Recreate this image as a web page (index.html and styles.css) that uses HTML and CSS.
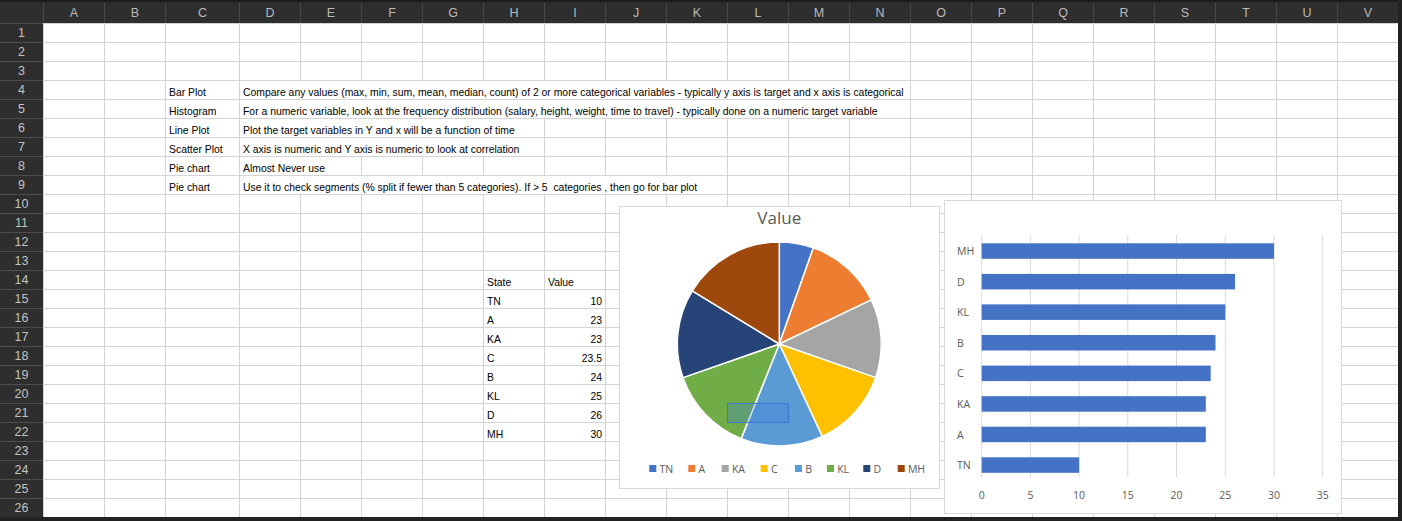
FILE: index.html
```html
<!DOCTYPE html>
<html>
<head>
<meta charset="utf-8">
<link rel="stylesheet" href="styles.css">
</head>
<body>
<div class="sheet">
  <div class="r hdr">
    <div class="corner"></div>
    <div class="hc">A</div><div class="hc">B</div><div class="hc">C</div><div class="hc">D</div><div class="hc">E</div><div class="hc">F</div><div class="hc">G</div><div class="hc">H</div><div class="hc">I</div><div class="hc">J</div><div class="hc">K</div><div class="hc">L</div><div class="hc">M</div><div class="hc">N</div><div class="hc">O</div><div class="hc">P</div><div class="hc">Q</div><div class="hc">R</div><div class="hc">S</div><div class="hc">T</div><div class="hc">U</div><div class="hc">V</div>
  </div>
  <div class="r"><div class="rh">1</div><div class="c"></div><div class="c"></div><div class="c"></div><div class="c"></div><div class="c"></div><div class="c"></div><div class="c"></div><div class="c"></div><div class="c"></div><div class="c"></div><div class="c"></div><div class="c"></div><div class="c"></div><div class="c"></div><div class="c"></div><div class="c"></div><div class="c"></div><div class="c"></div><div class="c"></div><div class="c"></div><div class="c"></div><div class="c"></div></div>
  <div class="r"><div class="rh">2</div><div class="c"></div><div class="c"></div><div class="c"></div><div class="c"></div><div class="c"></div><div class="c"></div><div class="c"></div><div class="c"></div><div class="c"></div><div class="c"></div><div class="c"></div><div class="c"></div><div class="c"></div><div class="c"></div><div class="c"></div><div class="c"></div><div class="c"></div><div class="c"></div><div class="c"></div><div class="c"></div><div class="c"></div><div class="c"></div></div>
  <div class="r"><div class="rh">3</div><div class="c"></div><div class="c"></div><div class="c"></div><div class="c"></div><div class="c"></div><div class="c"></div><div class="c"></div><div class="c"></div><div class="c"></div><div class="c"></div><div class="c"></div><div class="c"></div><div class="c"></div><div class="c"></div><div class="c"></div><div class="c"></div><div class="c"></div><div class="c"></div><div class="c"></div><div class="c"></div><div class="c"></div><div class="c"></div></div>
  <div class="r"><div class="rh">4</div><div class="c"></div><div class="c"></div><div class="c">Bar Plot</div><div class="c s11">Compare any values (max, min, sum, mean, median, count) of 2 or more categorical variables - typically y axis is target and x axis is categorical</div><div class="c"></div><div class="c"></div><div class="c"></div><div class="c"></div><div class="c"></div><div class="c"></div><div class="c"></div><div class="c"></div></div>
  <div class="r"><div class="rh">5</div><div class="c"></div><div class="c"></div><div class="c">Histogram</div><div class="c s11">For a numeric variable, look at the frequency distribution (salary, height, weight, time to travel) - typically done on a numeric target variable</div><div class="c"></div><div class="c"></div><div class="c"></div><div class="c"></div><div class="c"></div><div class="c"></div><div class="c"></div><div class="c"></div></div>
  <div class="r"><div class="rh">6</div><div class="c"></div><div class="c"></div><div class="c">Line Plot</div><div class="c s5">Plot the target variables in Y and x will be a function of time</div><div class="c"></div><div class="c"></div><div class="c"></div><div class="c"></div><div class="c"></div><div class="c"></div><div class="c"></div><div class="c"></div><div class="c"></div><div class="c"></div><div class="c"></div><div class="c"></div><div class="c"></div><div class="c"></div></div>
  <div class="r"><div class="rh">7</div><div class="c"></div><div class="c"></div><div class="c">Scatter Plot</div><div class="c s5">X axis is numeric and Y axis is numeric to look at correlation</div><div class="c"></div><div class="c"></div><div class="c"></div><div class="c"></div><div class="c"></div><div class="c"></div><div class="c"></div><div class="c"></div><div class="c"></div><div class="c"></div><div class="c"></div><div class="c"></div><div class="c"></div><div class="c"></div></div>
  <div class="r"><div class="rh">8</div><div class="c"></div><div class="c"></div><div class="c">Pie chart</div><div class="c s2">Almost Never use</div><div class="c"></div><div class="c"></div><div class="c"></div><div class="c"></div><div class="c"></div><div class="c"></div><div class="c"></div><div class="c"></div><div class="c"></div><div class="c"></div><div class="c"></div><div class="c"></div><div class="c"></div><div class="c"></div><div class="c"></div><div class="c"></div><div class="c"></div></div>
  <div class="r"><div class="rh">9</div><div class="c"></div><div class="c"></div><div class="c">Pie chart</div><div class="c s8">Use it to check segments (% split if fewer than 5 categories). If &gt; 5&nbsp; categories , then go for bar plot</div><div class="c"></div><div class="c"></div><div class="c"></div><div class="c"></div><div class="c"></div><div class="c"></div><div class="c"></div><div class="c"></div><div class="c"></div><div class="c"></div><div class="c"></div></div>
  <div class="r"><div class="rh">10</div><div class="c"></div><div class="c"></div><div class="c"></div><div class="c"></div><div class="c"></div><div class="c"></div><div class="c"></div><div class="c"></div><div class="c"></div><div class="c"></div><div class="c"></div><div class="c"></div><div class="c"></div><div class="c"></div><div class="c"></div><div class="c"></div><div class="c"></div><div class="c"></div><div class="c"></div><div class="c"></div><div class="c"></div><div class="c"></div></div>
  <div class="r"><div class="rh">11</div><div class="c"></div><div class="c"></div><div class="c"></div><div class="c"></div><div class="c"></div><div class="c"></div><div class="c"></div><div class="c"></div><div class="c"></div><div class="c"></div><div class="c"></div><div class="c"></div><div class="c"></div><div class="c"></div><div class="c"></div><div class="c"></div><div class="c"></div><div class="c"></div><div class="c"></div><div class="c"></div><div class="c"></div><div class="c"></div></div>
  <div class="r"><div class="rh">12</div><div class="c"></div><div class="c"></div><div class="c"></div><div class="c"></div><div class="c"></div><div class="c"></div><div class="c"></div><div class="c"></div><div class="c"></div><div class="c"></div><div class="c"></div><div class="c"></div><div class="c"></div><div class="c"></div><div class="c"></div><div class="c"></div><div class="c"></div><div class="c"></div><div class="c"></div><div class="c"></div><div class="c"></div><div class="c"></div></div>
  <div class="r"><div class="rh">13</div><div class="c"></div><div class="c"></div><div class="c"></div><div class="c"></div><div class="c"></div><div class="c"></div><div class="c"></div><div class="c"></div><div class="c"></div><div class="c"></div><div class="c"></div><div class="c"></div><div class="c"></div><div class="c"></div><div class="c"></div><div class="c"></div><div class="c"></div><div class="c"></div><div class="c"></div><div class="c"></div><div class="c"></div><div class="c"></div></div>
  <div class="r"><div class="rh">14</div><div class="c"></div><div class="c"></div><div class="c"></div><div class="c"></div><div class="c"></div><div class="c"></div><div class="c"></div><div class="c">State</div><div class="c">Value</div><div class="c"></div><div class="c"></div><div class="c"></div><div class="c"></div><div class="c"></div><div class="c"></div><div class="c"></div><div class="c"></div><div class="c"></div><div class="c"></div><div class="c"></div><div class="c"></div><div class="c"></div></div>
  <div class="r"><div class="rh">15</div><div class="c"></div><div class="c"></div><div class="c"></div><div class="c"></div><div class="c"></div><div class="c"></div><div class="c"></div><div class="c">TN</div><div class="c num">10</div><div class="c"></div><div class="c"></div><div class="c"></div><div class="c"></div><div class="c"></div><div class="c"></div><div class="c"></div><div class="c"></div><div class="c"></div><div class="c"></div><div class="c"></div><div class="c"></div><div class="c"></div></div>
  <div class="r"><div class="rh">16</div><div class="c"></div><div class="c"></div><div class="c"></div><div class="c"></div><div class="c"></div><div class="c"></div><div class="c"></div><div class="c">A</div><div class="c num">23</div><div class="c"></div><div class="c"></div><div class="c"></div><div class="c"></div><div class="c"></div><div class="c"></div><div class="c"></div><div class="c"></div><div class="c"></div><div class="c"></div><div class="c"></div><div class="c"></div><div class="c"></div></div>
  <div class="r"><div class="rh">17</div><div class="c"></div><div class="c"></div><div class="c"></div><div class="c"></div><div class="c"></div><div class="c"></div><div class="c"></div><div class="c">KA</div><div class="c num">23</div><div class="c"></div><div class="c"></div><div class="c"></div><div class="c"></div><div class="c"></div><div class="c"></div><div class="c"></div><div class="c"></div><div class="c"></div><div class="c"></div><div class="c"></div><div class="c"></div><div class="c"></div></div>
  <div class="r"><div class="rh">18</div><div class="c"></div><div class="c"></div><div class="c"></div><div class="c"></div><div class="c"></div><div class="c"></div><div class="c"></div><div class="c">C</div><div class="c num">23.5</div><div class="c"></div><div class="c"></div><div class="c"></div><div class="c"></div><div class="c"></div><div class="c"></div><div class="c"></div><div class="c"></div><div class="c"></div><div class="c"></div><div class="c"></div><div class="c"></div><div class="c"></div></div>
  <div class="r"><div class="rh">19</div><div class="c"></div><div class="c"></div><div class="c"></div><div class="c"></div><div class="c"></div><div class="c"></div><div class="c"></div><div class="c">B</div><div class="c num">24</div><div class="c"></div><div class="c"></div><div class="c"></div><div class="c"></div><div class="c"></div><div class="c"></div><div class="c"></div><div class="c"></div><div class="c"></div><div class="c"></div><div class="c"></div><div class="c"></div><div class="c"></div></div>
  <div class="r"><div class="rh">20</div><div class="c"></div><div class="c"></div><div class="c"></div><div class="c"></div><div class="c"></div><div class="c"></div><div class="c"></div><div class="c">KL</div><div class="c num">25</div><div class="c"></div><div class="c"></div><div class="c"></div><div class="c"></div><div class="c"></div><div class="c"></div><div class="c"></div><div class="c"></div><div class="c"></div><div class="c"></div><div class="c"></div><div class="c"></div><div class="c"></div></div>
  <div class="r"><div class="rh">21</div><div class="c"></div><div class="c"></div><div class="c"></div><div class="c"></div><div class="c"></div><div class="c"></div><div class="c"></div><div class="c">D</div><div class="c num">26</div><div class="c"></div><div class="c"></div><div class="c"></div><div class="c"></div><div class="c"></div><div class="c"></div><div class="c"></div><div class="c"></div><div class="c"></div><div class="c"></div><div class="c"></div><div class="c"></div><div class="c"></div></div>
  <div class="r"><div class="rh">22</div><div class="c"></div><div class="c"></div><div class="c"></div><div class="c"></div><div class="c"></div><div class="c"></div><div class="c"></div><div class="c">MH</div><div class="c num">30</div><div class="c"></div><div class="c"></div><div class="c"></div><div class="c"></div><div class="c"></div><div class="c"></div><div class="c"></div><div class="c"></div><div class="c"></div><div class="c"></div><div class="c"></div><div class="c"></div><div class="c"></div></div>
  <div class="r"><div class="rh">23</div><div class="c"></div><div class="c"></div><div class="c"></div><div class="c"></div><div class="c"></div><div class="c"></div><div class="c"></div><div class="c"></div><div class="c"></div><div class="c"></div><div class="c"></div><div class="c"></div><div class="c"></div><div class="c"></div><div class="c"></div><div class="c"></div><div class="c"></div><div class="c"></div><div class="c"></div><div class="c"></div><div class="c"></div><div class="c"></div></div>
  <div class="r"><div class="rh">24</div><div class="c"></div><div class="c"></div><div class="c"></div><div class="c"></div><div class="c"></div><div class="c"></div><div class="c"></div><div class="c"></div><div class="c"></div><div class="c"></div><div class="c"></div><div class="c"></div><div class="c"></div><div class="c"></div><div class="c"></div><div class="c"></div><div class="c"></div><div class="c"></div><div class="c"></div><div class="c"></div><div class="c"></div><div class="c"></div></div>
  <div class="r"><div class="rh">25</div><div class="c"></div><div class="c"></div><div class="c"></div><div class="c"></div><div class="c"></div><div class="c"></div><div class="c"></div><div class="c"></div><div class="c"></div><div class="c"></div><div class="c"></div><div class="c"></div><div class="c"></div><div class="c"></div><div class="c"></div><div class="c"></div><div class="c"></div><div class="c"></div><div class="c"></div><div class="c"></div><div class="c"></div><div class="c"></div></div>
  <div class="r"><div class="rh">26</div><div class="c"></div><div class="c"></div><div class="c"></div><div class="c"></div><div class="c"></div><div class="c"></div><div class="c"></div><div class="c"></div><div class="c"></div><div class="c"></div><div class="c"></div><div class="c"></div><div class="c"></div><div class="c"></div><div class="c"></div><div class="c"></div><div class="c"></div><div class="c"></div><div class="c"></div><div class="c"></div><div class="c"></div><div class="c"></div></div>

  <div class="chart pie">
    <svg class="chart-svg" viewBox="0 0 319 281" width="319" height="281">
      <text class="title" x="159.3" y="17" text-anchor="middle">Value</text>
      <g transform="translate(159.3,137)" stroke="#ffffff" stroke-width="1.5" stroke-linejoin="round">
        <path d="M0 0 L0 -102 A102 102 0 0 1 34.07 -96.14 Z" fill="#4472C4"/>
        <path d="M0 0 L34.07 -96.14 A102 102 0 0 1 91.99 -44.08 Z" fill="#ED7D31"/>
        <path d="M0 0 L91.99 -44.08 A102 102 0 0 1 96.28 33.66 Z" fill="#A5A5A5"/>
        <path d="M0 0 L96.28 33.66 A102 102 0 0 1 42.91 92.53 Z" fill="#FFC000"/>
        <path d="M0 0 L42.91 92.53 A102 102 0 0 1 -38.13 94.61 Z" fill="#5B9BD5"/>
        <path d="M0 0 L-38.13 94.61 A102 102 0 0 1 -96.28 33.66 Z" fill="#70AD47"/>
        <path d="M0 0 L-96.28 33.66 A102 102 0 0 1 -87.01 -53.22 Z" fill="#264478"/>
        <path d="M0 0 L-87.01 -53.22 A102 102 0 0 1 0 -102 Z" fill="#9E480E"/>
      </g>
      <rect x="107.5" y="196.5" width="61" height="19" fill="#3d7fdc" fill-opacity="0.3" stroke="#3f74cf" stroke-width="1"/>
      <g class="legend">
        <rect x="29.3" y="258" width="7" height="7" fill="#4472C4"/><text x="39.5" y="265.7">TN</text>
        <rect x="68.3" y="258" width="7" height="7" fill="#ED7D31"/><text x="78.5" y="265.7">A</text>
        <rect x="101.7" y="258" width="7" height="7" fill="#A5A5A5"/><text x="111.9" y="265.7">KA</text>
        <rect x="140.7" y="258" width="7" height="7" fill="#FFC000"/><text x="150.9" y="265.7">C</text>
        <rect x="175" y="258" width="7" height="7" fill="#5B9BD5"/><text x="185.2" y="265.7">B</text>
        <rect x="207" y="258" width="7" height="7" fill="#70AD47"/><text x="217.2" y="265.7">KL</text>
        <rect x="243.3" y="258" width="7" height="7" fill="#264478"/><text x="253.5" y="265.7">D</text>
        <rect x="277.7" y="258" width="7" height="7" fill="#9E480E"/><text x="287.9" y="265.7">MH</text>
      </g>
    </svg>
  </div>

  <div class="chart bar">
    <svg class="chart-svg" viewBox="0 0 396 312" width="396" height="312">
      <g stroke="#d9d9d9" stroke-width="1">
        <line x1="36.7" y1="34" x2="36.7" y2="276"/>
        <line x1="85.4" y1="34" x2="85.4" y2="276"/>
        <line x1="134.1" y1="34" x2="134.1" y2="276"/>
        <line x1="182.8" y1="34" x2="182.8" y2="276"/>
        <line x1="231.5" y1="34" x2="231.5" y2="276"/>
        <line x1="280.3" y1="34" x2="280.3" y2="276"/>
        <line x1="329" y1="34" x2="329" y2="276"/>
        <line x1="377.7" y1="34" x2="377.7" y2="276"/>
      </g>
      <g fill="#4472C4">
        <rect x="36.7" y="42.3" width="292.3" height="15.5"/>
        <rect x="36.7" y="72.9" width="253.3" height="15.5"/>
        <rect x="36.7" y="103.4" width="243.6" height="15.5"/>
        <rect x="36.7" y="134" width="233.8" height="15.5"/>
        <rect x="36.7" y="164.6" width="229" height="15.5"/>
        <rect x="36.7" y="195.2" width="224.1" height="15.5"/>
        <rect x="36.7" y="225.7" width="224.1" height="15.5"/>
        <rect x="36.7" y="256.3" width="97.4" height="15.5"/>
      </g>
      <g class="axis">
        <text x="12" y="54">MH</text>
        <text x="12" y="84.6">D</text>
        <text x="12" y="115.2">KL</text>
        <text x="12" y="145.8">B</text>
        <text x="12" y="176.3">C</text>
        <text x="12" y="206.9">KA</text>
        <text x="12" y="237.5">A</text>
        <text x="12" y="268">TN</text>
      </g>
      <g class="axis" text-anchor="middle">
        <text x="36.7" y="298">0</text>
        <text x="85.4" y="298">5</text>
        <text x="134.1" y="298">10</text>
        <text x="182.8" y="298">15</text>
        <text x="231.5" y="298">20</text>
        <text x="280.3" y="298">25</text>
        <text x="329" y="298">30</text>
        <text x="377.7" y="298">35</text>
      </g>
    </svg>
  </div>
</div>
</body>
</html>
```
FILE: styles.css
```css
* { box-sizing: border-box; }
html, body { margin: 0; padding: 0; }
body {
  background: #222222;
  width: 1402px;
  height: 521px;
  overflow: hidden;
  font-family: "Liberation Sans", Arial, sans-serif;
}
.sheet {
  position: relative;
  width: 1398px;
}
.r {
  display: grid;
  grid-template-columns: 43px 61px 61px 74px repeat(19, 61px);
  height: 19px;
  background: #ffffff;
}
.hdr {
  height: 23px;
  background: #2e2e2e;
  border-top: 2px solid #1c1c1c;
}
.corner { background: #2e2e2e; }
.hc {
  border-left: 1px solid #474747;
  color: #b9b9b9;
  font-size: 12.5px;
  display: flex;
  align-items: center;
  justify-content: center;
}
.rh {
  background: #2e2e2e;
  border-top: 1px solid #4d4d4d;
  color: #c2c2c2;
  font-size: 12.5px;
  display: flex;
  align-items: center;
  justify-content: center;
}
.c {
  border-left: 1px solid #d4d4d4;
  border-top: 1px solid #d4d4d4;
  font-family: "Liberation Sans", Arial, sans-serif;
  font-size: 10.4px;
  line-height: 12px;
  color: #000000;
  padding: 0 3px 0 3px;
  display: flex;
  align-items: flex-end;
  white-space: nowrap;
  overflow: hidden;
}
.num { justify-content: flex-end; }
.s2 { grid-column: span 2; }
.s5 { grid-column: span 5; }
.s8 { grid-column: span 8; }
.s11 { grid-column: span 11; }

.chart {
  position: absolute;
  background: #ffffff;
  border: 1px solid #d9d9d9;
}
.pie { left: 619px; top: 206px; width: 321px; height: 283px; }
.bar { left: 944px; top: 200px; width: 398px; height: 314px; }
.chart-svg { display: block; }
.title {
  font-family: "Open Sans", sans-serif;
  font-size: 17px;
  fill: #595959;
}
.legend text, .axis text {
  font-family: "Open Sans", sans-serif;
  font-size: 10.5px;
  fill: #595959;
}
```
